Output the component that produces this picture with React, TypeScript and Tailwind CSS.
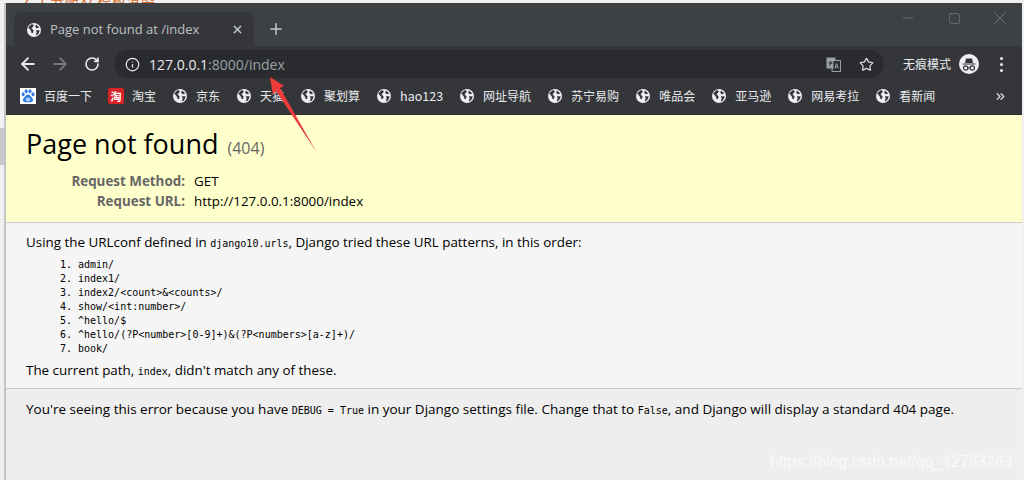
import { ArrowLeft, ArrowRight, ChevronsRight, Info, Minus, Plus, RotateCw, Square, Star, X } from "lucide-react";

const cjk = "font-['Microsoft_YaHei','Noto_Sans_CJK_SC',sans-serif]";

const Globe = () => (
  <svg width="14" height="14" viewBox="0 0 14 14" className="shrink-0">
    <circle cx="7" cy="7" r="7" fill="#eceef0" />
    <path d="M1.2 4.2 L4.8 1 L6.8 2 L6 4 L4.4 5 L6.6 7.4 L6 10 L4.6 10 L3.8 7.6 Z" fill="#35363a" />
    <path d="M9 1.6 L12.4 4.6 L9.4 5.2 L8.2 3.6 Z M9.2 7 L12.8 7.6 L11 11.6 L8.6 12.6 L9.6 10 Z" fill="#35363a" />
  </svg>
);

const Baidu = () => (
  <svg width="16" height="16" viewBox="0 0 16 16" className="shrink-0">
    <rect width="16" height="16" fill="#fff" />
    <ellipse cx="3.2" cy="6.2" rx="1.5" ry="2" fill="#2f7be6" />
    <ellipse cx="6.2" cy="3.2" rx="1.5" ry="2" fill="#2f7be6" />
    <ellipse cx="10" cy="3.2" rx="1.5" ry="2" fill="#2f7be6" />
    <ellipse cx="13" cy="6.2" rx="1.5" ry="2" fill="#2f7be6" />
    <path d="M8 6.6 C5.8 6.6 5.4 8.8 3.8 10 C2.2 11.4 3 14.4 5.6 14.2 C7 14.1 9 14.1 10.4 14.2 C13 14.4 13.8 11.4 12.2 10 C10.6 8.8 10.2 6.6 8 6.6 Z" fill="#2f7be6" />
    <ellipse cx="8" cy="11.4" rx="2.4" ry="2" fill="#a9cdf7" />
  </svg>
);

const Translate = () => (
  <svg width="15" height="15" viewBox="0 0 15 15" className="ml-auto shrink-0">
    <rect x="0.5" y="0.5" width="9" height="11" fill="#9aa0a6" />
    <path d="M7 3.5 H14.5 V14.5 H6 V11.5 H7 Z" fill="#292b2e" stroke="#9aa0a6" />
    <path d="M2.5 6 H6.5 M4.5 4 V6 M3 9 L6 6" stroke="#292b2e" strokeWidth="1" fill="none" />
    <path d="M9 11.5 L10.5 6.5 L12.2 11.5 M9.6 10 H11.6" stroke="#9aa0a6" strokeWidth="1" fill="none" />
  </svg>
);

const bookmarks = ["京东", "天猫", "聚划算", "hao123", "网址导航", "苏宁易购", "唯品会", "亚马逊", "网易考拉", "看新闻"];
const patterns = [
  "admin/",
  "index1/",
  "index2/<count>&<counts>/",
  "show/<int:number>/",
  "^hello/$",
  "^hello/(?P<number>[0-9]+)&(?P<numbers>[a-z]+)/",
  "book/",
];

const mono = "font-['DejaVu_Sans_Mono',monospace] text-[10px]";

const App = () => {
  return (
    <div className="relative h-[480px] w-[1024px] overflow-hidden bg-[#f0f0f0] font-['Open_Sans',sans-serif]">
      <div className={`h-[3px] overflow-hidden pl-[22px] text-[14px] leading-[1px] tracking-[0.5px] text-[#d8692a] ${cjk}`}>
        2. 1 分配及 模板渲染
      </div>
      <div className="ml-[4px] mr-[2px] flex h-[477px] flex-col border-l-2 border-[#c4c4c4]">
        {/* tab strip */}
        <div className="flex h-[43px] shrink-0 items-end bg-[#3e4144]">
          <div className="ml-[8px] flex h-[34px] w-[240px] items-center rounded-t-lg bg-[#35363a] pl-[13px] pr-[10px] pt-[1px]">
            <Globe />
            <span className="ml-[9px] text-[13px] text-[#bdc1c6]">Page not found at /index</span>
            <X size={13} strokeWidth={2.5} className="ml-auto text-[#c4c7cb]" />
          </div>
          <Plus size={18} strokeWidth={2} className="mb-[8px] ml-[13px] text-[#c4c7cb]" />
          <div className="mb-[18px] -mr-[1px] ml-auto flex items-center text-[#84878a]">
            <span className="flex w-[46px] justify-center"><Minus size={16} strokeWidth={1} /></span>
            <span className="flex w-[46px] justify-center"><Square size={13} strokeWidth={1.1} /></span>
            <span className="flex w-[46px] justify-center"><X size={20} strokeWidth={0.9} /></span>
          </div>
        </div>
        {/* toolbar */}
        <div className="flex h-[38px] shrink-0 items-center bg-[#35363a] pb-[2px] pl-[12px]">
          <ArrowLeft size={20} strokeWidth={2.2} className="text-[#e8eaed]" />
          <ArrowRight size={20} strokeWidth={2.2} className="ml-[12px] text-[#74777b]" />
          <RotateCw size={16} strokeWidth={2.4} className="ml-[14px] text-[#e8eaed]" />
          <div className="ml-[14px] flex h-[28px] w-[770px] items-center rounded-full bg-[#292b2e] pl-[11px] pr-[10px]">
            <Info size={15} strokeWidth={2} className="text-[#e8eaed]" />
            <span className="ml-[9px] text-[14px] text-[#e8eaed]">
              127.0.0.1<span className="text-[#9aa0a6]">:8000/index</span>
            </span>
            <Translate />
            <Star size={15} strokeWidth={2} className="ml-[18px] text-[#d5d7da]" />
          </div>
          <span className={`ml-[19px] text-xs text-[#e8eaed] ${cjk}`}>无痕模式</span>
          <svg width="20" height="20" viewBox="0 0 20 20" className="ml-[8px] shrink-0">
            <circle cx="10" cy="10" r="10" fill="#eceef0" />
            <path d="M3.5 9.5 H16.5 V10.5 H3.5 Z M6 9 L7 4.5 H13 L14 9 Z" fill="#35363a" />
            <circle cx="6.7" cy="14" r="2.2" fill="none" stroke="#35363a" strokeWidth="1.2" />
            <circle cx="13.3" cy="14" r="2.2" fill="none" stroke="#35363a" strokeWidth="1.2" />
            <path d="M8.9 14 H11.1" stroke="#35363a" strokeWidth="1" />
          </svg>
          <div className="ml-[21px] flex flex-col gap-[3px]">
            <span className="size-[3px] rounded-full bg-[#e8eaed]" />
            <span className="size-[3px] rounded-full bg-[#e8eaed]" />
            <span className="size-[3px] rounded-full bg-[#e8eaed]" />
          </div>
        </div>
        {/* bookmarks */}
        <div className={`flex h-[31px] shrink-0 items-center border-b border-[#28292c] bg-[#35363a] pb-[6px] pl-[14px] pr-[15px] text-xs text-[#e8eaed] ${cjk}`}>
          <Baidu />
          <span className="ml-[8px]">百度一下</span>
          <span className="ml-[16px] flex size-[16px] items-center justify-center rounded-[2px] bg-[#d8232a] text-[11px] font-bold leading-none text-white">淘</span>
          <span className="ml-[8px]">淘宝</span>
          <div className="ml-[17px] flex items-center gap-[9px]">
            {bookmarks.map((name) => (
              <span key={name} className="mr-[8px] flex items-center gap-[9px]">
                <Globe />
                <span className={name === "hao123" ? "text-[12.5px]" : ""}>{name}</span>
              </span>
            ))}
          </div>
          <ChevronsRight size={13} strokeWidth={2.5} className="ml-auto text-[#d5d7da]" />
        </div>
        {/* django 404 page */}
        <div className="flex min-h-0 grow flex-col text-[13.4px] text-black">
          <div className="h-[108px] shrink-0 border-b border-[#ccc] bg-[#ffffcc] px-[20px] pt-[10px]">
            <h1 className="text-[27px] leading-[38px]">
              Page not found <span className="ml-[2px] text-[16px] text-[#666]">(404)</span>
            </h1>
            <div className="mt-[4px] grid grid-cols-[159px_1fr] gap-x-[9px] leading-[20px]">
              <span className="text-right font-bold text-[#666]">Request Method:</span>
              <span>GET</span>
              <span className="text-right font-bold text-[#666]">Request URL:</span>
              <span>http://127.0.0.1:8000/index</span>
            </div>
          </div>
          <div className="h-[166px] shrink-0 border-b border-[#ccc] bg-[#f5f5f5] px-[20px] pt-[9px]">
            <p className="leading-[20px]">
              Using the URLconf defined in <code className={mono}>django10.urls</code>, Django tried these URL patterns, in this order:
            </p>
            <ol className={`mt-[4px] list-decimal pl-[52px] leading-[14px] ${mono}`}>
              {patterns.map((p) => (
                <li key={p}>{p}</li>
              ))}
            </ol>
            <p className="mt-[4px] leading-[20px]">
              The current path, <code className={mono}>index</code>, didn't match any of these.
            </p>
          </div>
          <div className="grow bg-[#eeeeee] px-[20px] pt-[10px]">
            <p className="text-[13.5px] leading-[20px]">
              You're seeing this error because you have <code className={mono}>DEBUG = True</code> in your Django settings file. Change that to <code className={mono}>False</code>, and Django will display a standard 404 page.
            </p>
          </div>
        </div>
      </div>
      {/* darker patch of the window behind, left of the browser */}
      <div className="absolute left-0 top-[128px] h-[37px] w-[4px] bg-[#c8c8c8]" />
      {/* annotation arrow drawn over the screenshot */}
      <svg width="60" height="90" viewBox="0 0 60 90" className="absolute left-[265px] top-[70px]">
        <path d="M5 7 L19 16 L15 18 L51.5 82 L11 21 L8 25 Z" fill="#ee3b3b" />
      </svg>
      <span className="absolute bottom-[6px] left-[770px] font-['Liberation_Sans',sans-serif] text-[15.8px] text-white/70">https://blog.csdn.net/qq_42783263</span>
    </div>
  );
};

export default App;
